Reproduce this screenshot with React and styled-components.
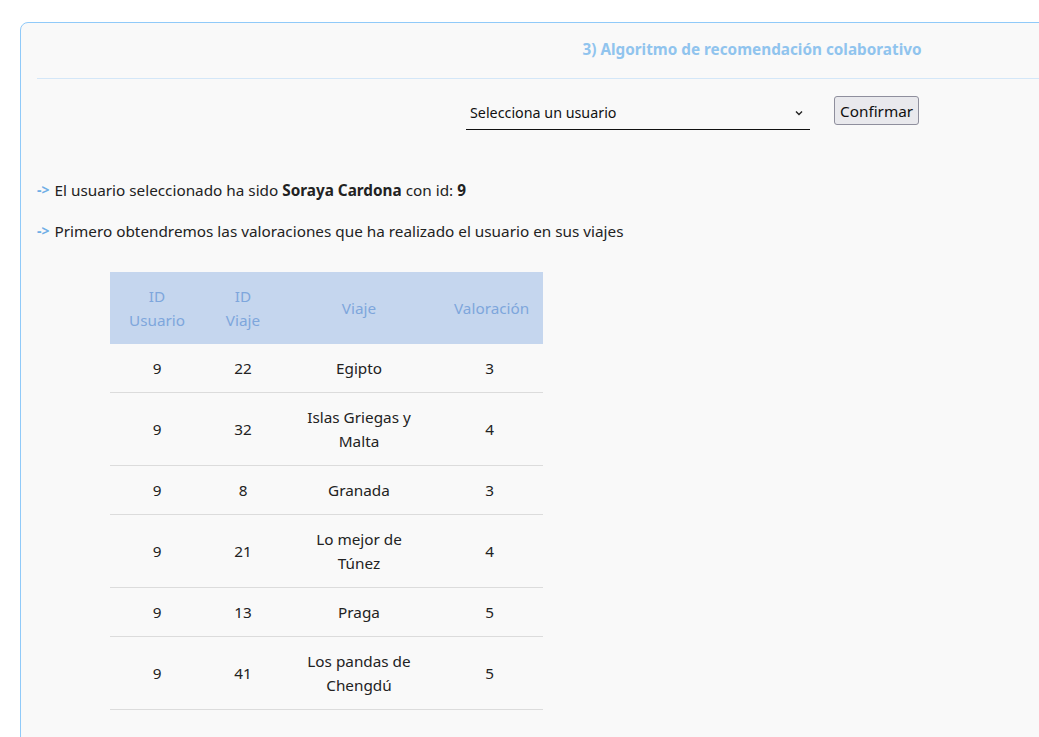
import React from 'react'
import styled, { createGlobalStyle } from 'styled-components'

const GlobalStyle = createGlobalStyle`
  html, body {
    margin: 0;
    padding: 0;
    background: #ffffff;
    overflow: hidden;
  }
  body {
    font-family: "Noto Sans", "Open Sans", sans-serif;
    color: #222;
  }
`

const Page = styled.div`
  padding: 22px 0 0 20px;
`

const Card = styled.section`
  width: 1464px;
  min-height: 760px;
  background: #f9f9f9;
  border: 1px solid #90caf9;
  border-radius: 8px;
  padding: 0 16px;
  box-sizing: border-box;
`

const Title = styled.h2`
  margin: 0;
  height: 56px;
  padding-bottom: 4px;
  box-sizing: border-box;
  display: flex;
  align-items: center;
  justify-content: center;
  font-size: 15.3px;
  font-weight: 700;
  color: #90c4ee;
  border-bottom: 1px solid #d4e7f8;
`

const Controls = styled.div`
  display: flex;
  align-items: flex-start;
  gap: 24px;
  padding: 17px 0 0 429px;
  height: 73px;
`

const SelectBox = styled.label`
  width: 344px;
  height: 34px;
  display: flex;
  align-items: center;
  justify-content: space-between;
  padding: 0 4px;
  box-sizing: border-box;
  border-bottom: 1px solid #111;
  font-size: 14.3px;
  color: #111;
`

const Chevron = styled.svg`
  width: 12px;
  height: 12px;
  margin-right: 1px;
`

const Button = styled.button`
  font-family: "Noto Sans", sans-serif;
  font-size: 15.3px;
  color: #111;
  background: #e9e9ed;
  border: 1px solid #8f8f9d;
  border-radius: 3px;
  padding: 2px 5px;
  height: 29px;
  margin-top: 0;
`

const Line = styled.p`
  margin: 0;
  height: 41px;
  display: flex;
  align-items: center;
  font-size: 15.3px;
  gap: 5px;
`

const Arrow = styled.span`
  color: #6eaee6;
  font-weight: 700;
  font-size: 14px;
`

const TableWrap = styled.div`
  padding: 21px 0 0 73px;
`

const Table = styled.table`
  border-collapse: collapse;
  table-layout: fixed;
  width: 433px;
  font-size: 15.3px;
`

const Head = styled.th`
  background: #c5d6ee;
  color: #7ea6dc;
  font-weight: 400;
  height: 72px;
  padding: 0 18px;
  line-height: 24px;
  text-align: center;
  width: ${({ $w }) => $w}px;
  box-sizing: border-box;
`

const Cell = styled.td`
  padding: 12px 18px;
  line-height: 24px;
  text-align: center;
  border-bottom: 1px solid #dcdcdc;
`

const rows = [
  [9, 22, 'Egipto', 3],
  [9, 32, 'Islas Griegas y Malta', 4],
  [9, 8, 'Granada', 3],
  [9, 21, 'Lo mejor de Túnez', 4],
  [9, 13, 'Praga', 5],
  [9, 41, 'Los pandas de Chengdú', 5],
]

export default function App() {
  return (
    <Page>
      <GlobalStyle />
      <Card>
        <Title>3) Algoritmo de recomendación colaborativo</Title>
        <Controls>
          <SelectBox>
            <span>Selecciona un usuario</span>
            <Chevron viewBox="0 0 12 12" fill="none" stroke="#222" strokeWidth="1.4">
              <path d="M3 4.5 L6 7.5 L9 4.5" />
            </Chevron>
          </SelectBox>
          <Button>Confirmar</Button>
        </Controls>
        <Line>
          <Arrow>-&gt;</Arrow>
          <span>El usuario seleccionado ha sido <b>Soraya Cardona</b> con id: <b>9</b></span>
        </Line>
        <Line>
          <Arrow>-&gt;</Arrow>
          <span>Primero obtendremos las valoraciones que ha realizado el usuario en sus viajes</span>
        </Line>
        <TableWrap>
          <Table>
            <thead>
              <tr>
                <Head $w={94}>ID Usuario</Head>
                <Head $w={78}>ID Viaje</Head>
                <Head $w={154}>Viaje</Head>
                <Head $w={107}>Valoración</Head>
              </tr>
            </thead>
            <tbody>
              {rows.map((r, i) => (
                <tr key={i}>
                  {r.map((v, j) => <Cell key={j}>{v}</Cell>)}
                </tr>
              ))}
            </tbody>
          </Table>
        </TableWrap>
      </Card>
    </Page>
  )
}
